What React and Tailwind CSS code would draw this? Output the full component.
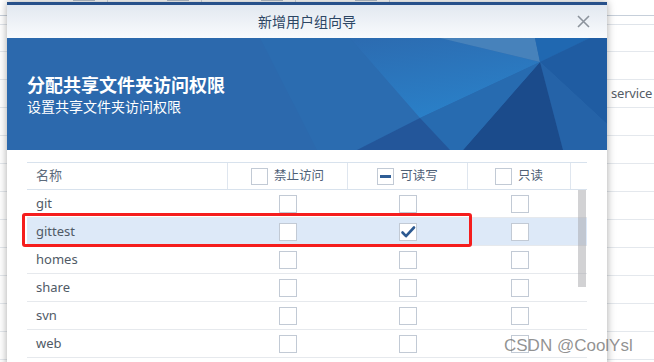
import React from 'react';

const FONT = { fontFamily: '"Noto Sans", "Noto Sans CJK SC", sans-serif' };

const SHARES = [
  { name: 'git', rw: false },
  { name: 'gittest', rw: true, selected: true },
  { name: 'homes', rw: false },
  { name: 'share', rw: false },
  { name: 'svn', rw: false },
  { name: 'web', rw: false },
];

function Box({ checked, dash, small }) {
  return (
    <div
      className={`flex items-center justify-center bg-white border border-[#c2cad5] ${
        small ? 'w-[17px] h-[17px]' : 'w-[18px] h-[18px]'
      }`}
    >
      {dash && <div className="w-[11px] h-[3px] bg-[#2f5d95]" />}
      {checked && (
        <svg width="18" height="18" viewBox="0 0 18 18" className="overflow-visible">
          <path d="M3.5 9.5 L7 13.2 L15 4.5" fill="none" stroke="#2d5a91" strokeWidth="2.6" strokeLinecap="round" strokeLinejoin="round" />
        </svg>
      )}
    </div>
  );
}

function Banner() {
  return (
    <div className="relative h-[112px] bg-[#2c69ad] overflow-hidden">
      <svg className="absolute inset-0" width="600" height="112" viewBox="0 0 600 112">
        <defs>
          <linearGradient id="glow" x1="0" y1="0" x2="0.4" y2="1">
            <stop offset="0" stopColor="#2c6bb0" />
            <stop offset="1" stopColor="#2a80c8" />
          </linearGradient>
        </defs>
        <polygon points="253,0 343,0 413,80 350,112 310,112" fill="#2b6cb0" />
        <polygon points="343,0 433,0 533,24 413,80" fill="url(#glow)" />
        <polygon points="433,0 528,0 533,24" fill="#4782bb" />
        <polygon points="528,0 583,0 533,24" fill="#2068b1" />
        <polygon points="583,0 600,0 600,86 533,24" fill="#1f5ca2" />
        <polygon points="533,24 600,86 600,112 556,112" fill="#2563a8" />
        <polygon points="533,24 456,112 556,112" fill="#1b4b8b" />
        <polygon points="413,80 533,24 456,112 443,112" fill="#276bb0" />
        <polygon points="413,80 350,112 443,112" fill="#23569a" />
      </svg>
      <div className="relative pl-[20px] pt-[36px] text-white flex flex-col">
        <div className="text-[18px] leading-[23px] font-bold">分配共享文件夹访问权限</div>
        <div className="text-[14px] leading-[17px] mt-[1px]">设置共享文件夹访问权限</div>
      </div>
    </div>
  );
}

function HeaderCell({ label, dash, last }) {
  return (
    <div className={`flex items-center justify-center gap-[6px] ${last ? '' : 'border-r border-[#dfe6ef]'}`}>
      <Box small dash={dash} />
      <span className="text-[12.5px] text-[#4f6076]">{label}</span>
    </div>
  );
}

function ShareTable() {
  return (
    <div className="text-[13px]">
      <div className="grid grid-cols-[201px_120px_120px_103px_16px] h-[28px] border-y border-[#d8e2ed]">
        <div className="flex items-center pl-[9px] text-[#5d6b7c] border-r border-[#dfe6ef]">名称</div>
        <HeaderCell label="禁止访问" />
        <HeaderCell label="可读写" dash />
        <HeaderCell label="只读" />
        <div />
      </div>
      <div className="relative">
        {SHARES.map((s) => (
          <div
            key={s.name}
            className={`grid grid-cols-[201px_120px_120px_103px_16px] h-[28px] border-b border-[#e6e9ed] ${
              s.selected ? 'bg-[#dde9f8]' : ''
            }`}
          >
            <div className="flex items-center pl-[9px] text-[#505a66]">{s.name}</div>
            <div className="flex items-center justify-center"><Box /></div>
            <div className="flex items-center justify-center"><Box checked={s.rw} /></div>
            <div className="flex items-center justify-center"><Box /></div>
            <div />
          </div>
        ))}
        {/* scrollbar */}
        <div className="absolute right-[1px] top-0 w-[8px] h-[97px] bg-[rgba(165,165,170,0.5)]" />
      </div>
    </div>
  );
}

function BackgroundPage() {
  return (
    <div className="absolute inset-0">
      <div className="h-[16px] border-b border-[#c6cfda] flex items-start">
        <div className="flex pl-[60px] h-[3px]">
          {[0, 1, 2, 3].map((i) => (
            <div key={i} className="w-[48px] h-[3px] border-r border-[#d3d9e0] mr-[46px] flex justify-center">
              <div className="w-[22px] h-[1px] bg-[#b9c2cd]" />
            </div>
          ))}
        </div>
      </div>
      <div className="h-[9px] border-b border-[#dfe4ea]" />
      <div className="h-[27px] border-b border-[#e4e8ed]" />
      <div className="h-[28px] border-b border-[#e4e8ed]" />
      <div className="h-[28px] border-b border-[#e4e8ed] flex items-center pl-[611px]">
        <span className="text-[13px] tracking-[-0.2px] text-[#555d66] whitespace-nowrap">service</span>
      </div>
      {Array.from({ length: 9 }).map((_, i) => (
        <div key={i} className="h-[28px] border-b border-[#e4e8ed]" />
      ))}
    </div>
  );
}

export default function App() {
  return (
    <div className="relative w-[654px] h-[362px] overflow-hidden bg-white" style={FONT}>
      <BackgroundPage />

      {/* dialog window */}
      <div className="absolute left-[7px] top-[2px] w-[600px] h-[380px] bg-white shadow-[0_0_8px_rgba(0,0,0,0.35)]">
        <div className="h-[3px] bg-[#27508a]" />
        <div className="relative h-[33px] flex items-center justify-center bg-gradient-to-b from-[#e2e8f0] to-[#f9fbfd]">
          <span className="text-[14px] text-[#2c4664]">新增用户组向导</span>
          <svg className="absolute right-[17px] top-[10px]" width="13" height="13" viewBox="0 0 13 13">
            <path d="M1 1 L12 12 M12 1 L1 12" stroke="#8c939c" strokeWidth="1.6" />
          </svg>
        </div>
        <Banner />
        <div className="px-[20px] pt-[12px]">
          <ShareTable />
        </div>
      </div>

      {/* red annotation */}
      <div className="absolute left-[22px] top-[213px] w-[450px] h-[34px] border-[3px] border-[#f51d1d] rounded-[3px]" />

      {/* watermark */}
      <div
        className="absolute left-[504px] top-[333px] text-[17px] text-[rgba(110,110,110,0.75)]"
        style={{ fontFamily: '"Liberation Sans", Arial, sans-serif' }}
      >
        CSDN @CoolYsl
      </div>
    </div>
  );
}
